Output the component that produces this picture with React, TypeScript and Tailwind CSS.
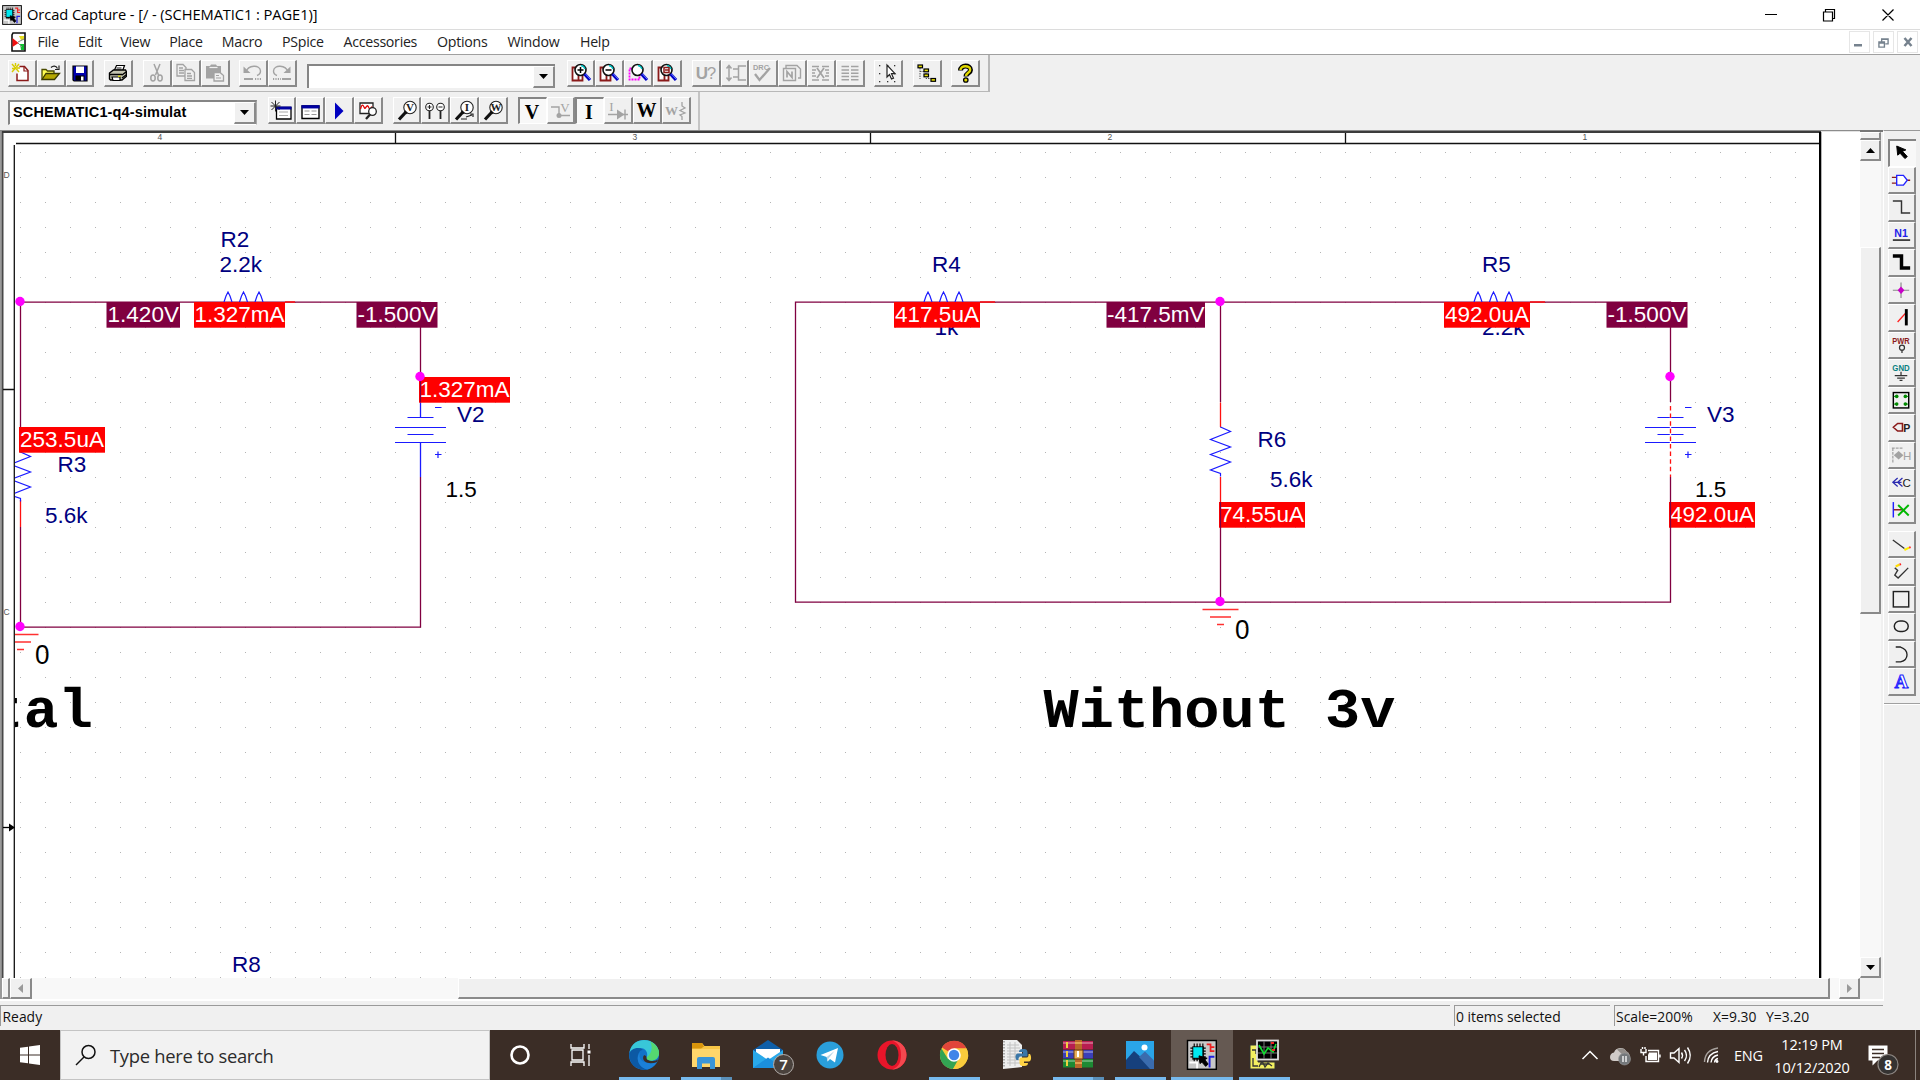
import type { ReactNode } from "react";

/* ---------- shared pieces ---------- */

function Btn({ children, pressed = false, gap = "" }: { children?: ReactNode; pressed?: boolean; gap?: string }) {
  return (
    <div
      className={
        "h-[27px] w-[28.8px] shrink-0 border-solid " +
        (pressed
          ? "border-t-2 border-l-2 border-r border-b border-t-[#858585] border-l-[#858585] border-r-white border-b-white bg-[#f8f8f8] "
          : "border-t border-l border-r-2 border-b-2 border-t-white border-l-white border-r-[#8a8a8a] border-b-[#8a8a8a] bg-[#f0f0f0] ") +
        gap
      }
    >
      <svg viewBox="1 1 26 24" className="block h-[24px] w-[26px] overflow-visible" fill="none">
        {children}
      </svg>
    </div>
  );
}

const GR = "#a3a3a3";

function Glyph({ x, y, size, color, serif, bold, children }: { x: number; y: number; size: number; color: string; serif?: boolean; bold?: boolean; children: string }) {
  return (
    <text
      x={x}
      y={y}
      fontSize={size}
      fill={color}
      textAnchor="middle"
      fontWeight={bold ? 700 : 400}
      className={serif ? "font-['Liberation_Serif',serif]" : "font-['Liberation_Sans',sans-serif]"}
    >
      {children}
    </text>
  );
}

/* ---------- standard toolbar icons ---------- */

const NewIcon = () => (
  <>
    <path d="M11.5 6.5h5l3.5 4v10h-11v-7" fill="#fff" stroke="#8b1a1a" strokeWidth="1.5" />
    <path d="M16 6.5v4.5h4" stroke="#8b1a1a" strokeWidth="1.2" />
    <path d="M4 4l7 8M11 4l-7 8M7.500 3v3M4 8.500h3M9 8h3" stroke="#d8cc00" strokeWidth="1.4" />
  </>
);
const OpenIcon = () => (
  <>
    <path d="M5 19.500V9.500h4l1.500 1.500h6.500v3" fill="#ffff55" stroke="#4a4a00" strokeWidth="1.3" />
    <path d="M5 19.500l4-6h13.500l-5 6z" fill="#b5a800" stroke="#3a3a00" strokeWidth="1.3" />
    <path d="M14 7.500c2-2 5-2 6.500 1M22 5.500v4h-4" stroke="#222" strokeWidth="1.2" />
  </>
);
const SaveIcon = () => (
  <>
    <path d="M7 6h14v15H8l-1-1z" fill="#0000b0" stroke="#000" strokeWidth="1.2" />
    <path d="M10 6.500h8v6.500h-8z" fill="#fff" />
    <path d="M9.500 15.500h9v5h-9z" fill="#000" />
    <path d="M15 16.500h2.500v4h-2.500z" fill="#fff" />
  </>
);
const PrintIcon = () => (
  <>
    <path d="M10 11l2.500-5.500h8L18.500 11" fill="#fff" stroke="#000" strokeWidth="1.2" />
    <path d="M12.500 8h5M11.500 10h6" stroke="#000" strokeWidth=".9" />
    <path d="M5.500 13l4-3h12l.8 1.500v5l-4.300 3.500H6.500l-1-1z" fill="#c4c4b0" stroke="#000" strokeWidth="1.4" />
    <path d="M6 14.500h12M18 15l4-3M18 18l4-3" stroke="#000" strokeWidth="1.4" />
    <path d="M8 17h8v3.500H9z" fill="#fff" stroke="#000" strokeWidth="1.200" />
    <path d="M14 16.300h2.500" stroke="#d8d800" strokeWidth="1.300" />
  </>
);
const CutIcon = () => (
  <g stroke={GR} strokeWidth="1.500">
    <path d="M11 4l4.500 11M17 4l-4.500 11" />
    <ellipse cx="10" cy="18" rx="2.200" ry="3" />
    <ellipse cx="17" cy="18" rx="2.200" ry="3" />
  </g>
);
const CopyIcon = () => (
  <g stroke={GR} strokeWidth="1.300" fill="#f0f0f0">
    <path d="M5 4.500h6l3 3V16H5z" />
    <path d="M13 9.500h6.500l3 3v8H13z" />
    <path d="M7 8h4M7 10.500h5M7 13h5M15 13.500h4M15 16h5M15 18.300h5" />
  </g>
);
const PasteIcon = () => (
  <>
    <path d="M5 6h4l1-1.500h5L16 6h4v12.500H5z" fill={GR} />
    <path d="M8.500 7.500h8" stroke="#f0f0f0" strokeWidth="1.2" />
    <path d="M13 12.500h6l3.500 3v5.500H13z" fill="#f0f0f0" stroke={GR} strokeWidth="1.300" />
    <path d="M15 15.500h3M15 18h5" stroke={GR} />
  </>
);
const UndoIcon = () => (
  <>
    <path d="M7 12c2-7 14-8 14.500-1 0 3-2 4-3.500 4.500" stroke={GR} strokeWidth="1.400" />
    <path d="M4.500 6.500v6.500h7z" fill={GR} />
    <path d="M5 19h9" stroke={GR} strokeWidth="2" />
    <path d="M16 19h7" stroke={GR} strokeWidth="2" strokeDasharray="1.200 1.200" />
  </>
);
const RedoIcon = () => (
  <>
    <path d="M20 12C18 5 6 4 5.500 11c0 3 2 4 3.500 4.500" stroke={GR} strokeWidth="1.400" />
    <path d="M22.500 6.500v6.500h-7z" fill={GR} />
    <path d="M14 19h9" stroke={GR} strokeWidth="2" />
    <path d="M5 19h8" stroke={GR} strokeWidth="2" strokeDasharray="1.200 1.200" />
  </>
);
function Zoom({ kind }: { kind: "in" | "out" | "area" | "all" }) {
  return (
    <>
      {kind === "area" ? (
        <path d="M5.500 8.500h10v11h-10z" stroke="#ff00ff" strokeWidth="1.800" strokeDasharray="2 1" />
      ) : (
        <path d="M5.500 7.500h6v13h-6zM5.500 20.500h10v-7" fill="#fff" stroke="#8b1a1a" strokeWidth="1.800" />
      )}
      <circle cx="13.500" cy="10" r="5.500" fill="#fff" stroke="#111" strokeWidth="1.600" />
      <path d="M14 5.500a5 5 0 0 1 4 3.500" stroke="#00c0c0" strokeWidth="1.300" />
      {kind === "in" && <path d="M10.500 10h6M13.500 7v6" stroke="#000" strokeWidth="1.500" />}
      {kind === "out" && <path d="M10.500 10h6" stroke="#000" strokeWidth="1.500" />}
      {kind === "all" && <path d="M11 7.500h5v5h-5zM12 10h4" stroke="#8b1a1a" strokeWidth="1.500" />}
      <path d="M17.500 14l5.500 6" stroke="#0000c8" strokeWidth="3.200" />
      <path d="M18.500 14l5 5.500" stroke="#6f7fff" strokeWidth="1" />
    </>
  );
}
const AnnotateIcon = () => (
  <>
    <Glyph x={10} y={18.500} size={17} color={GR} bold>U</Glyph>
    <Glyph x={19.500} y={18.500} size={17} color={GR}>?</Glyph>
  </>
);
const BackAnnIcon = () => (
  <g stroke={GR} strokeWidth="1.500">
    <path d="M8 6v14M5.500 8.500L8 5.500l2.500 3M5.500 17.500L8 20.500l2.500-3M12 9h5M12 17h5M25 6h-7.500v14H25" />
  </g>
);
const DrcIcon = () => (
  <>
    <text x="4" y="9.500" fontSize="8" fontWeight="700" fill={GR} textLength="16" lengthAdjust="spacingAndGlyphs" className="font-['Liberation_Sans',sans-serif]">DRC</text>
    <path d="M6 14l4.500 6L21 8" stroke={GR} strokeWidth="2.300" />
  </>
);
const NetlistIcon = () => (
  <g stroke={GR} strokeWidth="1.400">
    <path d="M8 8V5.500h11l3.500 3.500V18H20" />
    <path d="M5.500 8.500h12v12h-12z" />
    <path d="M9 17.500V11.500l5 6v-6" strokeWidth="1.700" />
  </g>
);
const XrefIcon = () => (
  <g stroke={GR} strokeWidth="1.400">
    <path d="M5 6.500h7M15 6.500h7M5 10h4M18 10h4M5 13h3M19 13h3M5 16h4M18 16h4M5 20h7M15 20h7" />
    <path d="M10 8l7 10M17 8l-7 10" strokeWidth="1.700" />
  </g>
);
const BomIcon = () => (
  <path d="M5.500 6.500h7.500M15 6.500h7.500M5.500 10h7.500M15 10h7.500M5.500 13.200h7.500M15 13.200h7.500M5.500 16.500h7.500M15 16.500h7.500M5.500 19.800h7.500M15 19.800h7.500" stroke={GR} strokeWidth="1.500" />
);
const SnapIcon = () => (
  <>
    {[5, 13, 20].map((x) => [5, 13, 21].map((y) => <rect key={x + "-" + y} x={x} y={y} width="1.300" height="1.300" fill="#333" />))}
    <path d="M13 5v12l2.500-2.500 2 4.500 2-.8-2-4.500h3.500z" fill="#fff" stroke="#222" strokeWidth="1.200" />
  </>
);
const ProjIcon = () => (
  <>
    <path d="M7 8v11M7 11.500h6M13 13v5.500h6M7 7h2" stroke="#555" strokeWidth="1" strokeDasharray="1.500 1" />
    {[[5, 5], [11, 9], [11, 14], [18, 18.500]].map(([x, y]) => (
      <rect key={x + "," + y} x={x} y={y} width="4.500" height="2.800" fill="#e8e000" stroke="#000" strokeWidth="1.200" />
    ))}
  </>
);
const HelpIcon = () => (
  <>
    <path d="M9.500 10.500c0-6 10-6 10-.5 0 3-4.500 3-4.500 6.500" stroke="#000" strokeWidth="5" />
    <path d="M9.500 10c0-5 9.700-5 9.700-.3 0 3-4.200 3-4.200 6.300" stroke="#e0d800" strokeWidth="2.400" />
    <circle cx="14.800" cy="20" r="2.200" fill="#e0d800" stroke="#000" strokeWidth="1.300" />
  </>
);

/* ---------- PSpice toolbar icons ---------- */

const NewSimIcon = () => (
  <>
    <path d="M8.500 10.500h14.500v11.500H8.500z" fill="#fff" stroke="#000" strokeWidth="1.300" />
    <path d="M8 11h15.500" stroke="#0000a0" strokeWidth="3" />
    <path d="M11 15h9M11 18.500h9" stroke="#aaa" strokeWidth="1.200" />
    <path d="M3.500 5l8 8M11.500 5l-8 8M7.500 3.500v11M2.500 9h10" stroke="#222" strokeWidth="1" />
  </>
);
const EditSimIcon = () => (
  <>
    <path d="M6 9h17v12.500H6z" fill="#fff" stroke="#000" strokeWidth="1.400" />
    <path d="M5.500 9.800h18" stroke="#0000a0" strokeWidth="3.300" />
    <path d="M8.500 14h5M15.500 14h5M8.500 17.500h5M15.500 17.500h5" stroke="#999" strokeWidth="1.200" />
  </>
);
const RunIcon = () => <path d="M10 5.500l8.500 8.500-8.500 8.500z" fill="#0000c0" />;
const ViewSimIcon = () => (
  <>
    <path d="M6 6h13v10.500H6z" fill="#fff" stroke="#222" strokeWidth="1.300" />
    <path d="M6.500 12c2-7 3-3 4-1s2.500-5 4-1 2.500 1 3.500-.500" stroke="#e00000" strokeWidth="1.300" />
    <circle cx="18.500" cy="14.500" r="3.800" fill="#fff" stroke="#222" strokeWidth="1.300" />
    <path d="M16 17.500l-4 4.500" stroke="#222" strokeWidth="2.300" />
  </>
);
function Probe({ letter, arrow = false }: { letter: string; arrow?: boolean }) {
  return (
    <>
      <circle cx="17" cy="10.500" r="6.200" fill="#fff" stroke="#222" strokeWidth="1.100" />
      <Glyph x={17} y={14.200} size={11} color="#222" serif bold>{letter}</Glyph>
      <path d="M12.500 15.500l-6.500 7" stroke="#111" strokeWidth="3.200" />
      <path d="M11.500 14l2.500 2.500" stroke="#111" strokeWidth="2" />
      {arrow && <path d="M16 20l6-2M20 17h3v3M11 22h6" stroke="#222" strokeWidth="1.200" />}
    </>
  );
}
const DiffIcon = () => (
  <g stroke="#222" strokeWidth="1.100">
    <circle cx="8.500" cy="10" r="3.800" fill="#fff" />
    <circle cx="19.500" cy="10" r="3.800" fill="#fff" />
    <path d="M6.500 10h4M8.500 8v4M17.500 10h4" />
    <path d="M8.500 14v8M19.500 14v8" strokeWidth="1.800" />
  </g>
);
const VNodeIcon = () => (
  <>
    <path d="M4 10h8v9M11 18.500h12" stroke={GR} strokeWidth="1.400" />
    <circle cx="12" cy="18.500" r="2.500" fill={GR} />
    <Glyph x={18} y={14.500} size={13} color={GR} serif>V</Glyph>
  </>
);
const IDiodeIcon = () => (
  <>
    <Glyph x={7.500} y={14} size={13} color={GR} serif>I</Glyph>
    <path d="M4 17.500h20M21 12.500v10" stroke={GR} strokeWidth="1.400" />
    <path d="M13 12.500l7.500 5-7.500 5z" fill={GR} />
  </>
);
const WPartIcon = () => (
  <>
    <Glyph x={9.500} y={18} size={13} color={GR} serif bold>W</Glyph>
    <path d="M20 5v4l3 2-5 2.500 5 2.500-5 2 2 1.500V23" stroke={GR} strokeWidth="1.300" />
  </>
);

/* ---------- tool palette ---------- */

function PBtn({ children, pressed = false }: { children?: ReactNode; pressed?: boolean }) {
  return (
    <div
      className={
        "h-[27.5px] w-[28px] shrink-0 border-solid " +
        (pressed
          ? "border-t-2 border-l-2 border-b border-t-[#858585] border-l-[#858585] border-b-white bg-[#f8f8f8]"
          : "border-t border-l border-r-2 border-b-2 border-t-white border-l-white border-r-[#8a8a8a] border-b-[#8a8a8a] bg-[#f0f0f0]")
      }
    >
      <svg viewBox="1 1 26 25" className="block h-[24.5px] w-[25px] overflow-visible" fill="none">
        {children}
      </svg>
    </div>
  );
}

const paletteTop: ReactNode[] = [
  <path key="a" d="M8 6l1 9.500 2.500-2 5 5.500 2.500-2-5-5.500 3.500-1.500z" fill="#000" stroke="#000" />,
  <g key="b" strokeWidth="1.400">
    <path d="M4 10.500h5M4 16.500h5M20 13.500h3" stroke="#8b1a1a" />
    <path d="M9 8.500h7l4 5-4 5H9z" fill="#fff" stroke="#2020ff" />
  </g>,
  <path key="c" d="M5 7h9v12.500h9" stroke="#333" strokeWidth="1.500" />,
  <g key="d">
    <text x="13.500" y="15.500" fontSize="11" fontWeight="700" fill="#2020e8" textAnchor="middle" textLength="14" lengthAdjust="spacingAndGlyphs" className="font-['Liberation_Sans',sans-serif]">N1</text>
    <path d="M5 18.500h18" stroke="#000" strokeWidth="1.400" />
  </g>,
  <path key="e" d="M5 7h9v12.500h9" stroke="#000" strokeWidth="3.600" />,
  <g key="f">
    <path d="M5 13.500h17M13.500 5.500v16" stroke="#888" strokeWidth="1.200" />
    <path d="M13.500 9.500l3.500 4-3.500 4-3.500-4z" fill="#c800c8" />
  </g>,
  <g key="g">
    <path d="M10 18.500l8-9" stroke="#ff2020" strokeWidth="1.400" />
    <path d="M19 5v17" stroke="#000" strokeWidth="3" />
  </g>,
  <g key="h">
    <text x="13.500" y="12" fontSize="8.500" fontWeight="700" fill="#8b1a1a" textAnchor="middle" textLength="18" lengthAdjust="spacingAndGlyphs" className="font-['Liberation_Sans',sans-serif]">PWR</text>
    <circle cx="14.500" cy="16" r="2.600" stroke="#333" strokeWidth="1.300" />
    <path d="M14.500 18.500v3" stroke="#333" strokeWidth="1.300" />
  </g>,
  <g key="i">
    <text x="13.500" y="12" fontSize="8.500" fontWeight="700" fill="#0a8080" textAnchor="middle" textLength="18" lengthAdjust="spacingAndGlyphs" className="font-['Liberation_Sans',sans-serif]">GND</text>
    <path d="M13.500 13v4M7 17h13M9.500 19.500h8M12 22h3" stroke="#333" strokeWidth="1.300" />
  </g>,
  <g key="j">
    <rect x="5.500" y="5.500" width="16" height="16" stroke="#000" strokeWidth="1.500" />
    {[9, 18].map((x) => [9.500, 17.500].map((y) => <circle key={x + "," + y} cx={x} cy={y} r="1.900" fill="#008a00" />))}
    <path d="M6 9.500h4M17 9.500h4M6 17.500h4M17 17.500h4" stroke="#008a00" />
  </g>,
  <g key="k">
    <path d="M15 9.500H10L5.500 13.500 10 17.500h5z" stroke="#8b1a1a" strokeWidth="1.600" />
    <Glyph x={19.500} y={18} size={11} color="#222" bold>P</Glyph>
  </g>,
  <g key="l">
    <path d="M5 6v16M4 6h12" stroke={GR} strokeWidth="1.300" strokeDasharray="3 1" />
    <path d="M11 9l5 4.500-5 4.500-5-4.500z" fill={GR} />
    <Glyph x={20} y={18} size={12} color={GR}>H</Glyph>
  </g>,
  <g key="m">
    <path d="M10 9l-5 4.500 5 4.500M15 9l-5 4.500 5 4.500M5 13.500h9" stroke="#2a2ab0" strokeWidth="1.300" />
    <Glyph x={19.500} y={18} size={12} color="#222">C</Glyph>
  </g>,
  <g key="n">
    <path d="M5.500 5v16" stroke="#2020ff" strokeWidth="1.500" />
    <path d="M6 13h9" stroke="#8b1a1a" strokeWidth="1.500" />
    <path d="M10.500 8l11 11M21.500 8l-11 11" stroke="#00b800" strokeWidth="2" />
  </g>,
];

const paletteBottom: ReactNode[] = [
  <g key="a">
    <path d="M5 9l12 9" stroke="#333" strokeWidth="1.400" />
    <path d="M17 19.500l5-2.500" stroke="#ffee00" strokeWidth="2.200" />
    <path d="M22 17l1.500-.5" stroke="#ff2020" strokeWidth="2" />
  </g>,
  <g key="b">
    <path d="M7 10l3 2.500-3 5 3.500 3L21 10" stroke="#333" strokeWidth="1.400" />
    <path d="M8 8.500l4-2" stroke="#ffdd00" strokeWidth="2.200" />
    <path d="M12 6.500l1.500-.5" stroke="#ff2020" strokeWidth="2" />
  </g>,
  <rect key="c" x="5.500" y="5.500" width="16" height="16" stroke="#222" strokeWidth="1.500" />,
  <rect key="d" x="6.500" y="8" width="14.500" height="11" rx="6" stroke="#222" strokeWidth="1.500" />,
  <path key="e" d="M8 6h5c9 3 9 13 0 15.500H8" stroke="#222" strokeWidth="1.400" />,
  <text key="f" x="14" y="20.500" fontSize="20" fontWeight="700" fill="#fff" stroke="#2020ff" strokeWidth="1.100" textAnchor="middle" className="font-['Liberation_Serif',serif]">A</text>,
];

/* ---------- schematic ---------- */

const WIRE = "#800040";
const BLUE = "#1a1aff";
const NAVY = "#000080";

const texts: [number, number, string, string][] = [
  [220.500, 247, "R2", NAVY],
  [219.500, 272, "2.2k", NAVY],
  [457, 422, "V2", NAVY],
  [445.500, 497, "1.5", "#000"],
  [57.500, 472, "R3", NAVY],
  [45, 522.500, "5.6k", NAVY],
  [232, 972, "R8", NAVY],
  [932, 272, "R4", NAVY],
  [934.500, 335, "1k", NAVY],
  [1257.500, 447, "R6", NAVY],
  [1270, 487, "5.6k", NAVY],
  [1482, 272, "R5", NAVY],
  [1482, 335, "2.2k", NAVY],
  [1707, 422, "V3", NAVY],
  [1695, 497, "1.5", "#000"],
];

const probes: [number, number, number, string, string][] = [
  [106.500, 302, 73.500, "1.420V", WIRE],
  [194, 302, 91, "1.327mA", "#ff0000"],
  [356.500, 302, 81, "-1.500V", WIRE],
  [419, 377, 91, "1.327mA", "#ff0000"],
  [19, 427, 86, "253.5uA", "#ff0000"],
  [894, 302, 86, "417.5uA", "#ff0000"],
  [1106.500, 302, 98.500, "-417.5mV", WIRE],
  [1444, 302, 86, "492.0uA", "#ff0000"],
  [1606.500, 302, 81, "-1.500V", WIRE],
  [1219, 502, 86, "74.55uA", "#ff0000"],
  [1669, 502, 86, "492.0uA", "#ff0000"],
];

function Battery({ x }: { x: number }) {
  return (
    <path
      d={`M${x - 13} 417.500h26M${x - 25.500} 427.500h51M${x - 13} 434.500h26M${x - 25.500} 442.500h51M${x + 14.500} 407.500h6.500M${x + 14.500} 454.500h6.500M${x + 17.500} 451.500v6.500`}
      stroke={BLUE}
      strokeWidth="1.200"
    />
  );
}

function Peaks({ x }: { x: number }) {
  return (
    <path
      d={[0, 15.500, 31].map((o) => `M${x + o - 4} 302l2-6 2-4 2 4 2 6`).join("")}
      stroke={BLUE}
      strokeWidth="1.200"
    />
  );
}

function Ground({ x, y }: { x: number; y: number }) {
  return <path d={`M${x - 18} ${y + 7.500}h36M${x - 10.500} ${y + 15}h21M${x - 3.500} ${y + 22.500}h7`} stroke="#ff3030" strokeWidth="1.300" />;
}

function Schematic() {
  return (
    <svg viewBox="0 130 1860 848" className="block h-[848px] w-[1860px] shrink-0" fill="none">
      <defs>
        <pattern id="dots" x="20" y="152" width="25" height="25" patternUnits="userSpaceOnUse">
          <rect width="1" height="1" fill="#b4b4b4" />
        </pattern>
        <clipPath id="sheet">
          <rect x="15" y="144" width="1804" height="834" />
        </clipPath>
      </defs>
      <rect x="0" y="130" width="1860" height="848" fill="#fff" />
      <rect x="16" y="146" width="1800" height="832" fill="url(#dots)" />

      {/* window edge and rulers */}
      <path d="M0 130h1.500v848H0z" fill="#9a9a9a" />
      <path d="M1.500 130h2v848h-2z" fill="#484848" />
      <path d="M0 130h1860v1.200H0z" fill="#8c8c8c" />
      <path d="M2 131h1819v2H2z" fill="#3c3c3c" />
      <path d="M16 143.500H1820M14.300 145V978" stroke="#111" strokeWidth="1.300" />
      <path d="M1819 132h2.300v846H1819z" fill="#000" />
      <path d="M395.500 133v10M870.500 133v10M1345.500 133v10M3 389.500h11" stroke="#111" strokeWidth="1.300" />
      <path d="M3 827.500h8" stroke="#000" strokeWidth="1.300" />
      <path d="M9 823.500l6 4-6 4z" fill="#000" />
      <g className="font-['Liberation_Sans',sans-serif] text-[8.500px]" fill="#555">
        <text x="157.500" y="140">4</text>
        <text x="632.500" y="140">3</text>
        <text x="1107.500" y="140">2</text>
        <text x="1582.500" y="140">1</text>
        <text x="3.500" y="177.500">D</text>
        <text x="3.500" y="615">C</text>
      </g>

      <g clipPath="url(#sheet)">
        <g stroke={WIRE} strokeWidth="1.300">
          <path d="M20.500 302.200H420.500V402M20.500 302V440M20.500 527V627.200H420.500V477" />
          <path d="M1220.500 302.200H795.500V602.200H1670.500V477M1220.500 302.200H1670.500V402M1220.500 302V402M1220.500 502V602" />
        </g>
        <path d="M285 302h10M980 302h15M1530 302h15M20.500 500V527M1220.500 402.500V427M1220.500 477V502" stroke="#ff1010" strokeWidth="1.300" />
        <path d="M420.500 402V417.500M420.500 442.500V477" stroke={BLUE} strokeWidth="1.300" />
        <path d="M20.500 452l10 4.500-20 8 20 7.500-20 7.500 20 7.500-20 8 10 3.500v3" stroke={BLUE} strokeWidth="1.200" />
        <path d="M1220.500 427l10 4.500-20 8 20 7.500-20 7.500 20 7.500-20 8 10 3.500v3" stroke={BLUE} strokeWidth="1.200" />
        <Peaks x={228} />
        <Peaks x={928} />
        <Peaks x={1478} />
        <Battery x={420.500} />
        <Battery x={1670.500} />
        <path d="M1670.500 403.500V477" stroke="#fff" strokeWidth="1.400" />
        <path d="M1670.500 406V477" stroke="#ff1010" strokeWidth="1.300" strokeDasharray="4.500 3.100" />
        <Ground x={20.500} y={627} />
        <Ground x={1220.500} y={602} />

        <g className="font-['Liberation_Sans',sans-serif] text-[22.500px]">
          {texts.map(([x, y, t, c]) => (
            <text key={x + t} x={x} y={y} fill={c}>{t}</text>
          ))}
          <g className="text-[27px]" fill="#000">
            <text x="35" y="664" textLength="14.500" lengthAdjust="spacingAndGlyphs">0</text>
            <text x="1235" y="639" textLength="14.500" lengthAdjust="spacingAndGlyphs">0</text>
          </g>
          {probes.map(([x, y, w, t, c]) => (
            <g key={x + t}>
              <rect x={x} y={y} width={w} height="25.700" fill={c} />
              <text x={x + w / 2} y={y + 20.300} textAnchor="middle" fill="#fff">{t}</text>
            </g>
          ))}
        </g>
        <path d="M420.500 377v25M1220.500 502v26M1670.500 502v26" stroke={WIRE} strokeWidth="1.200" />
        {[[20, 301.500], [20, 626.500], [420, 376.500], [1220, 301.500], [1220, 601.500], [1670, 376.500]].map(([x, y]) => (
          <circle key={x + "," + y} cx={x} cy={y} r="4.700" fill="#ff00ff" />
        ))}
        <g className="font-['Liberation_Mono',monospace] text-[55px] font-bold" fill="#000">
          <text x="-11" y="726.500" textLength="104" lengthAdjust="spacingAndGlyphs">tal</text>
          <text x="1043.500" y="726.500" textLength="352" lengthAdjust="spacingAndGlyphs">Without 3v</text>
        </g>
      </g>
    </svg>
  );
}

/* ---------- scroll bars ---------- */

const RAISED = "border-solid border-t border-l border-r-2 border-b-2 border-t-white border-l-white border-r-[#8a8a8a] border-b-[#8a8a8a] bg-[#f0f0f0]";

function Tri({ dir, color }: { dir: "up" | "down" | "left" | "right"; color: string }) {
  const d = { up: "M0 5l4.500-5 4.500 5z", down: "M0 0l4.500 5 4.500-5z", left: "M5 0v9L0 4.500z", right: "M0 0v9l5-4.500z" }[dir];
  return (
    <svg viewBox="0 0 9 9" className={dir === "up" || dir === "down" ? "mt-1 h-[9px] w-[9px]" : "ml-1 h-[9px] w-[9px]"}>
      <path d={d} fill={color} />
    </svg>
  );
}

/* ---------- taskbar ---------- */

function CaptureArt() {
  return (
    <>
      <rect x="0" y="0" width="30" height="30" fill="#c8c8c8" stroke="#000" strokeWidth="1.500" />
      <path d="M5 6h12v14H5z" fill="#111" />
      <path d="M3 8h16M3 11h16M3 14h16M3 17h16M7 3v19M10 3v19M13 3v19M16 3v19" stroke="#000" strokeWidth="1.200" />
      <path d="M6 7h9.500v11H6z" fill="#00e8f0" />
      <path d="M20 4h4v7h4M24 7h4" stroke="#f02020" strokeWidth="1.800" fill="none" />
      <path d="M23 28v-11h5" stroke="#2020e0" strokeWidth="2" fill="none" />
      <path d="M2 23h8v6" stroke="#fff" strokeWidth="2" fill="none" />
      <path d="M12 16l1 8 2-1.500 4 4.500 2.500-2.500-3.500-4.500 2.500-1.500z" fill="#000" stroke="#000" />
    </>
  );
}

function Slot({ children, bar, split = false, active = false }: { children: ReactNode; bar?: boolean; split?: boolean; active?: boolean }) {
  return (
    <div className={"flex h-[50px] w-[62px] flex-col items-center " + (active ? "bg-[#655952]" : "")}>
      <div className="flex h-[47px] items-center pt-[3px]">
        <svg viewBox="0 0 36 34" className="h-[34px] w-[36px] overflow-visible" fill="none">
          {children}
        </svg>
      </div>
      {bar && (
        <div className={"flex h-[3px] " + (active ? "w-full bg-[#76b9ed]" : "w-[51px] bg-[#76b9ed]")}>
          {split && <div className="ml-auto h-full w-[11px] bg-[#5a8fb8]" />}
        </div>
      )}
    </div>
  );
}

function Taskbar() {
  return (
    <div className="flex h-[50px] w-full shrink-0 bg-[#3b2d26] font-['Open_Sans',sans-serif] text-white">
      <div className="flex w-[60px] items-center justify-center">
        <svg viewBox="0 0 20 20" className="h-[20px] w-[20px]" fill="#fff">
          <path d="M0 2.800L8 1.700V9.500H0zM9 1.500L20 0v9.500H9zM0 10.500h8v7.800L0 17.200zM9 10.500h11V20L9 18.500z" />
        </svg>
      </div>
      <div className="flex w-[430px] items-center border border-[#c4c4c4] bg-[#f2f2f2]">
        <svg viewBox="0 0 22 22" className="ml-[14px] h-[22px] w-[22px]" fill="none" stroke="#111" strokeWidth="1.500">
          <circle cx="13.500" cy="8" r="6.500" />
          <path d="M9 13l-8 8" />
        </svg>
        <span className="ml-[13px] pt-px text-[18.400px] tracking-[-0.300px] text-[#2b2b2b]">Type here to search</span>
      </div>
      <div className="flex w-[60px] items-center justify-center">
        <svg viewBox="0 0 22 22" className="h-[22px] w-[22px]"><circle cx="11" cy="11" r="8.500" fill="none" stroke="#fff" strokeWidth="2.600" /></svg>
      </div>
      <div className="flex w-[63px] items-center justify-center">
        <svg viewBox="0 0 22 24" className="mr-[2px] h-[24px] w-[22px]" fill="none" stroke="#fff" strokeWidth="1.300">
          <path d="M2 7h11v10H2zM1 1v4h13V1M1 23v-4h13v4M19 1v5M19 12v11" />
          <path d="M17.500 7.500h3v3h-3z" fill="#fff" stroke="none" />
        </svg>
      </div>

      <Slot bar>
        <circle cx="18" cy="17" r="15" fill="#1273c9" />
        <path d="M3.500 15C5 5 12 2 18 2c9 0 15 6.500 15 13 0 5-4 7.500-8 7.500-3.500 0-5.500-1.500-4-4C22 15 20 10 14 10c-6 0-9.500 3-10.500 5z" fill="#38c7d8" />
        <path d="M24 3.500c6 2.500 9 7.500 9 11.500 0 5-4 7.500-8 7.500-3 0-5-1-4-3.500 5-4 6-10 3-15.500z" fill="#55d870" />
        <path d="M14 13c-5 6-2 16 8 18.500-5 1.500-19-1-18.700-16C5 10 14 8 17 12c-1 0-2 0-3 1z" fill="#0c59a4" />
        <path d="M14 14.500c-3 8 6 13 17 9.500-2 3-5 6-9 7.500-9-1-13-11-8-17z" fill="#1b80d8" />
        <path d="M20.500 20c0 2.500 6 4.500 11.500 1.500l-.8 2.500c-8 3-15 0-14-5 .3-3 3.300-1.800 3.300 1z" fill="#3b2d26" />
      </Slot>
      <Slot bar split>
        <path d="M4 5h10l2.500 3H32v21H4z" fill="#f8c646" />
        <path d="M4 5h10l2 3.500-3 2H4z" fill="#d9950c" />
        <path d="M4 11h28v18H4z" fill="#ffd66b" />
        <path d="M9 31v-10q0-2 2-2h14q2 0 2 2v10h-5v-5.500h-8V31z" fill="#3a95d8" />
      </Slot>
      <Slot>
        <path d="M3 12L18 2l15 10v18H3z" fill="#0f5fa8" />
        <path d="M6 11h24v12H6z" fill="#fff" />
        <path d="M3 12l15 10L33 12v18H3z" fill="#29a9ea" />
        <path d="M3 30l15-10.500L33 30z" fill="#1b8fdc" />
        <circle cx="33.500" cy="26.500" r="10" fill="#4a423d" stroke="#b5b0ad" strokeWidth="1" />
        <text x="33.500" y="32" fontSize="15" fontWeight="600" textAnchor="middle" fill="#fff">7</text>
      </Slot>
      <Slot>
        <circle cx="18" cy="17" r="13.500" fill="#2a9fdb" />
        <path d="M8.500 17L26 10l-3 14.500-5-3.500-2.500 2.500-.8-4.500z" fill="#fff" />
        <path d="M14.700 19l7.800-6-6 7.500-1 3z" fill="#b8d4e6" />
      </Slot>
      <Slot>
        <ellipse cx="18" cy="17" rx="14.500" ry="14.500" fill="#e8152a" />
        <path d="M18 2.500c9 0 14.500 7 14.500 14.500S26 31.500 18 31.500c7-2 9-8 9-14.500S25 4.500 18 2.500z" fill="#f4484f" />
        <ellipse cx="18" cy="17" rx="6.500" ry="11" fill="#3b2d26" />
      </Slot>
      <Slot bar>
        <circle cx="18" cy="17" r="14" fill="#f9cb3c" />
        <path d="M18 17L6 9.500A14 14 0 0 1 30.500 10.500H18z" fill="#e0453a" />
        <path d="M5.500 10.500A14 14 0 0 0 17 31l5.500-10H12z" fill="#33a453" />
        <path d="M18 10.500h12.500A14 14 0 0 1 17 31l7-10z" fill="#f9cb3c" />
        <circle cx="18" cy="17" r="6.800" fill="#fff" />
        <circle cx="18" cy="17" r="5.200" fill="#4285e8" />
      </Slot>
      <Slot>
        <path d="M5 2h14l5 5v22L5 31z" fill="#eee" />
        <path d="M9 7h12M9 10h13M9 13h13M9 16h13M9 19h13M9 22h13M9 25h13M12 4v24M17 4v24" stroke="#c2c2c2" strokeWidth="1" />
        <path d="M6 3v27" stroke="#aaa" strokeWidth="2" strokeDasharray="1.500 1.500" />
        <path d="M25 11c4 0 4.500 1.500 4.500 4v3.500h-7c-2 0-2 2-2 3.500h-2c-2-3-1-6.500 1.500-6.500H25V14h-4c0-2 1-3 4-3z" fill="#3b77a8" />
        <path d="M26 28c-4 0-4.500-1.500-4.500-4v-2.500c0-1.500 1-2 2-2h5c2 0 2-2 2-3.500h1.500c2 3 1 7.500-1 7.500h-5v1.500h4c0 2-1 3-4 3z" fill="#ffd344" />
      </Slot>
      <Slot bar split>
        <path d="M3 3h30v8.500H3z" fill="#b81e50" />
        <path d="M3 12h30v8.500H3z" fill="#3a3fb8" />
        <path d="M3 21h30v8.500H3z" fill="#1d8a34" />
        <path d="M3 5h30M3 14h30M3 23h30" stroke="#ffffff66" strokeWidth="1.300" />
        <path d="M7 4v6M7 13v6M7 22v6" stroke="#f0d040" strokeWidth="2" />
        <path d="M15 2h7v28h-7z" fill="#b8682a" />
        <path d="M14 12h9v9h-9z" fill="#e8b058" stroke="#6b3a10" />
        <path d="M18 13v6" stroke="#fff" strokeWidth="2" />
        <path d="M15 5h7M15 25h7" stroke="#e0a050" strokeWidth="2" />
      </Slot>
      <Slot bar>
        <rect x="4" y="3" width="28" height="28" fill="#2aa5e8" />
        <path d="M4 22l8-9 20 18H4z" fill="#16407c" />
        <path d="M17 19l6-5.500 9 9V31h-4z" fill="#3a6cae" />
        <circle cx="22.500" cy="9.500" r="3" fill="#fff" />
      </Slot>
      <Slot bar active>
        <g transform="translate(3.500 2.500) scale(.96)"><CaptureArt /></g>
      </Slot>
      <Slot bar>
        <path d="M4 7h8v17h17v7H4z" fill="#f4f060" stroke="#333" />
        <path d="M6 12h4v4M7 20v8h5M13 29l3-6 3 6 3-4 4 3M15 26h8" stroke="#333" strokeWidth="1.300" />
        <rect x="11" y="2.500" width="21" height="19" fill="#000" stroke="#ddd" strokeWidth="1.800" />
        <path d="M12 9h19M12 15h19M18 3v18M25 3v18" stroke="#777" strokeWidth="1" />
        <path d="M13 7l5 9 4-6 5 4 3-8" stroke="#10e030" strokeWidth="1.600" />
        <path d="M25 5h3M26 12h3" stroke="#f02020" strokeWidth="2" />
      </Slot>

      {/* notification area */}
      <svg viewBox="0 0 150 50" className="ml-[284px] h-[50px] w-[150px] shrink-0" fill="none">
        <path d="M3.500 29l7.500-7.500L18.500 29" stroke="#fff" strokeWidth="1.500" />
        <path d="M31 27a5 5 0 0 1 4-4.500 7 7 0 0 1 12.500-1 5 5 0 0 1 3 5q0 4.500-4 4.500H35a4 4 0 0 1-4-4z" fill="#cfcac7" />
        <path d="M38 19.500a7 7 0 0 1 9.500 2 5 5 0 0 1 3 5l-4 1z" fill="#918c88" />
        <circle cx="45.500" cy="29" r="6" fill="#74787b" stroke="#9a9a9a" strokeWidth=".6" />
        <path d="M44 26v6M47 26v6" stroke="#fff" strokeWidth="1.300" />
        <g stroke="#fff" strokeWidth="1.400">
          <path d="M69 20.500h10.500v11H67v-5.500M62 19v3.500h5V19M63.500 17v2M66 17v2M64.500 22.500v3M81 24.500v3" />
        </g>
        <path d="M70 22.500h8v7.500h-9v-5z" fill="#fff" />
        <g stroke="#fff" strokeWidth="1.400">
          <path d="M91.500 23h3.500l5-4.500v14L95 28h-3.500z" />
          <path d="M102.500 22.500q2 3 0 6M105.500 20q4 5.500 0 11M108.500 17.500q5.500 8 0 16" />
        </g>
        <g stroke="#fff" strokeWidth="1.400">
          <path d="M125.500 32Q126 20 139 18" stroke="#a8a29e" />
          <path d="M128.500 32.500Q129 23.500 139 21.500M132 32.500Q132.500 26.500 139 25M135.500 32.500Q136 29 139 28.500" />
        </g>
        <circle cx="138" cy="31.500" r="1.400" fill="#fff" />
      </svg>
      <span className="ml-[5px] flex w-[30px] items-center pt-px text-[14.500px] tracking-[-0.200px]">ENG</span>
      <div className="ml-[6px] flex w-[84px] flex-col items-center pt-[3px] text-[14.500px] leading-[23px] tracking-[-0.150px] whitespace-nowrap">
        <span>12:19 PM</span>
        <span>10/12/2020</span>
      </div>
      <svg viewBox="0 0 36 50" className="ml-[12px] h-[50px] w-[36px] shrink-0 overflow-visible" fill="none">
        <path d="M2.500 15.500h19v15h-10l-5 5v-5h-4z" fill="#fff" />
        <path d="M6 19.500h12M6 23.500h12M6 27.500h8" stroke="#3b2d26" strokeWidth="1.300" />
        <circle cx="22" cy="34.500" r="10" fill="#353332" stroke="#8d8783" strokeWidth="1.200" />
        <text x="22" y="39.500" fontSize="13.500" fontWeight="700" textAnchor="middle" fill="#fff">8</text>
      </svg>
      <div className="mr-[4px] ml-auto w-px bg-[#8b837e]" />
    </div>
  );
}

export default function App() {
  return (
    <div className="flex h-[1080px] w-[1920px] flex-col overflow-hidden bg-[#f0f0f0] font-['Open_Sans',sans-serif]">
      {/* title bar */}
      <div className="flex h-[30px] shrink-0 items-center border-b border-[#dcdcdc] bg-white">
        <svg viewBox="-1 -1 32 32" className="ml-[2px] h-[20px] w-[20px]" fill="none"><CaptureArt /></svg>
        <span className="ml-[5px] text-[14.700px] tracking-[-0.090px] whitespace-nowrap text-black">Orcad Capture - [/ - (SCHEMATIC1 : PAGE1)]</span>
        <svg viewBox="0 0 130 14" className="mr-[26px] ml-auto h-[14px] w-[130px]" fill="none" stroke="#000" strokeWidth="1.200">
          <path d="M1 6.500h12M59.500 4h9v9h-9zM61.500 4V1.500h9v9H68.500M118.500 1.500l11 11M129.500 1.500l-11 11" />
        </svg>
      </div>

      {/* menu bar */}
      <div className="flex h-[25px] shrink-0 items-center border-b border-[#a0a0a0] bg-white text-[14.200px] tracking-[-0.280px] text-[#222]">
        <svg viewBox="0 0 16 20" className="ml-[11px] h-[20px] w-[16px]" fill="none">
          <path d="M2 1h12v18H1V3z" fill="#fff" stroke="#111" strokeWidth="1.600" />
          <path d="M1.500 6l6 5-6 4z" fill="#f01010" />
          <path d="M8 4h5v4h-3z" fill="#e8e020" />
          <path d="M9 12h4v6h-3z" fill="#10c030" />
          <path d="M7 10l6-3M7 11l4 4" stroke="#888" />
        </svg>
        <div className="ml-[10.500px] flex pb-px">
          <span className="w-[40.500px]">File</span>
          <span className="w-[42.300px]">Edit</span>
          <span className="w-[49px]">View</span>
          <span className="w-[52.500px]">Place</span>
          <span className="w-[60.200px]">Macro</span>
          <span className="w-[61.500px]">PSpice</span>
          <span className="w-[93.500px]">Accessories</span>
          <span className="w-[70.500px]">Options</span>
          <span className="w-[72.500px]">Window</span>
          <span>Help</span>
        </div>
        <div className="mr-[2px] ml-auto flex gap-[3px]">
          <div className="flex h-[22px] w-[21px] items-center justify-center border border-[#e6e6e6]"><svg viewBox="0 0 10 10" className="mr-[3px] h-[10px] w-[10px]"><path d="M1 7h8v2.500H1z" fill="#76828e" /></svg></div>
          <div className="flex h-[22px] w-[21px] items-center justify-center border border-[#e6e6e6]"><svg viewBox="0 0 12 12" className="h-[11px] w-[11px]" fill="none" stroke="#76828e" strokeWidth="1.500"><path d="M1 5.500h6v5.500H1zM4 5V2h7v5.500H8M1 6.500h6M4 2.500h7" /></svg></div>
          <div className="flex h-[22px] w-[21px] items-center justify-center border border-[#e6e6e6]"><svg viewBox="0 0 10 10" className="h-[10px] w-[10px]" fill="none" stroke="#76828e" strokeWidth="2.500"><path d="M1.500 1l7 8M8.500 1l-7 8" /></svg></div>
        </div>
      </div>

      {/* standard toolbar */}
      <div className="flex h-[37px] shrink-0">
        <div className="flex w-[989.500px] items-start border-r-2 border-b border-[#b8b8b8] pt-[5px] pl-[8px]">
          <Btn><NewIcon /></Btn>
          <Btn><OpenIcon /></Btn>
          <Btn><SaveIcon /></Btn>
          <Btn gap="ml-[10px]"><PrintIcon /></Btn>
          <Btn gap="ml-[10px]"><CutIcon /></Btn>
          <Btn><CopyIcon /></Btn>
          <Btn><PasteIcon /></Btn>
          <Btn gap="ml-[9.500px]"><UndoIcon /></Btn>
          <Btn><RedoIcon /></Btn>
          <div className="mt-[4px] ml-[10px] flex h-[24px] w-[248px] justify-end border-t-2 border-l-2 border-[#858585] bg-white">
            <div className={"flex h-[22px] w-[22px] items-center justify-center " + RAISED}><Tri dir="down" color="#000" /></div>
          </div>
          <Btn gap="ml-[12px]"><Zoom kind="in" /></Btn>
          <Btn><Zoom kind="out" /></Btn>
          <Btn><Zoom kind="area" /></Btn>
          <Btn><Zoom kind="all" /></Btn>
          <Btn gap="ml-[10px]"><AnnotateIcon /></Btn>
          <Btn><BackAnnIcon /></Btn>
          <Btn><DrcIcon /></Btn>
          <Btn><NetlistIcon /></Btn>
          <Btn><XrefIcon /></Btn>
          <Btn><BomIcon /></Btn>
          <Btn gap="ml-[9.500px]"><SnapIcon /></Btn>
          <Btn gap="ml-[9.800px]"><ProjIcon /></Btn>
          <Btn gap="ml-[9.800px]"><HelpIcon /></Btn>
        </div>
      </div>

      {/* simulation toolbar */}
      <div className="flex h-[38px] shrink-0">
        <div className="flex w-[699.500px] items-start border-r-2 border-[#c4c4c4] pt-[5px] pl-[8px]">
          <div className="mt-[3px] flex h-[25px] w-[248.500px] items-center border-t-2 border-r border-b border-l-2 border-t-[#858585] border-r-[#aaa] border-b-white border-l-[#858585] bg-white">
            <span className="ml-[3px] font-['Liberation_Sans',sans-serif] text-[14.500px] font-bold tracking-[0.140px] whitespace-nowrap text-black">SCHEMATIC1-q4-simulat</span>
            <div className={"ml-auto flex h-[22px] w-[22px] items-center justify-center " + RAISED}><Tri dir="down" color="#000" /></div>
          </div>
          <Btn gap="ml-[11px]"><NewSimIcon /></Btn>
          <Btn><EditSimIcon /></Btn>
          <Btn><RunIcon /></Btn>
          <Btn><ViewSimIcon /></Btn>
          <Btn gap="ml-[10px]"><Probe letter="V" /></Btn>
          <Btn><DiffIcon /></Btn>
          <Btn><Probe letter="I" arrow /></Btn>
          <Btn><Probe letter="W" /></Btn>
          <Btn pressed gap="ml-[10px]"><Glyph x={13} y={21} size={20} color="#000" serif bold>V</Glyph></Btn>
          <Btn><VNodeIcon /></Btn>
          <Btn pressed><Glyph x={13} y={21} size={20} color="#000" serif bold>I</Glyph></Btn>
          <Btn><IDiodeIcon /></Btn>
          <Btn><Glyph x={13.500} y={20} size={20} color="#000" serif bold>W</Glyph></Btn>
          <Btn><WPartIcon /></Btn>
        </div>
      </div>

      {/* document area and palette */}
      <div className="flex h-[871px] shrink-0">
        <div className="flex w-[1883px] flex-col">
          <div className="flex h-[848px]">
            <Schematic />
            <div className="flex w-[21px] flex-col border-t-2 border-[#777] bg-[#f8f8f8]">
              <div className={"h-[8px] shrink-0 " + RAISED} />
              <div className={"flex h-[21px] shrink-0 items-center justify-center " + RAISED}><Tri dir="up" color="#000" /></div>
              <div className={"mt-[86px] h-[367px] shrink-0 " + RAISED} />
              <div className={"mt-auto flex h-[21px] shrink-0 items-center justify-center " + RAISED}><Tri dir="down" color="#000" /></div>
            </div>
            <div className="w-[2px] border-t-2 border-[#777] bg-[#f0f0f0]" />
          </div>
          <div className="flex h-[23px] border-b-2 border-white">
            <div className="w-[2px] bg-[#999]" />
            <div className={"h-[21px] w-[8px] " + RAISED} />
            <div className={"flex h-[21px] w-[22px] items-center justify-center " + RAISED}><Tri dir="left" color="#9a9a9a" /></div>
            <div className="h-[21px] w-[426px] bg-[#f8f8f8]" />
            <div className={"h-[21px] w-[1372px] " + RAISED} />
            <div className="h-[21px] w-[9px] bg-[#f8f8f8]" />
            <div className={"flex h-[21px] w-[21px] items-center justify-center " + RAISED}><Tri dir="right" color="#9a9a9a" /></div>
          </div>
        </div>
        <div className="flex w-[37px] flex-col border-t border-l border-t-[#999] border-l-white bg-[#f0f0f0] pt-[8px] pl-[4px]">
          {paletteTop.map((icon, i) => <PBtn key={i} pressed={i === 0}>{icon}</PBtn>)}
          <div className="h-[6.500px] shrink-0" />
          {paletteBottom.map((icon, i) => <PBtn key={i}>{icon}</PBtn>)}
          <div className="mt-[7.500px] -ml-[4px] h-[2px] shrink-0 border-t border-b border-t-[#a0a0a0] border-b-white" />
        </div>
      </div>

      {/* status bar */}
      <div className="flex h-[29px] shrink-0 items-start pt-[4px] text-[13.900px] leading-[22px] tracking-[0.010px] text-[#111]">
        <div className="h-[21px] w-[1450px] border-t border-l border-[#9a9a9a] pl-[1.500px]">Ready</div>
        <div className="ml-[4px] h-[21px] w-[156px] border-t border-l border-[#9a9a9a] pl-[1px]">0 items selected</div>
        <div className="ml-[3.500px] flex h-[21px] w-[269.500px] border-t border-l border-[#9a9a9a] pl-[1.500px]">
          <span className="w-[97px]">Scale=200%</span>
          <span className="w-[53px]">X=9.30</span>
          <span>Y=3.20</span>
        </div>
      </div>

      <Taskbar />
    </div>
  );
}
